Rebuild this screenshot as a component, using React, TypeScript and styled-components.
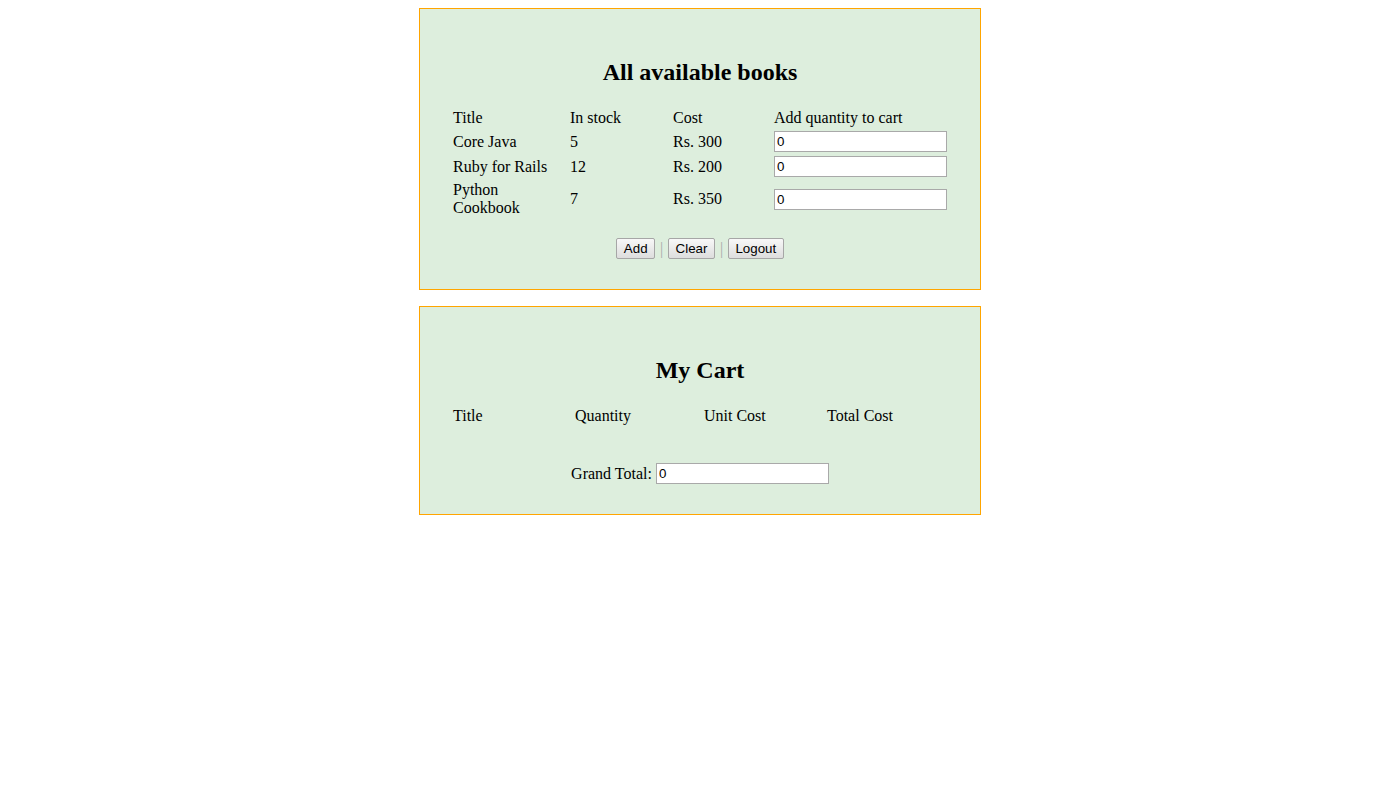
import React from "react";
import styled, { createGlobalStyle } from "styled-components";

const GlobalStyle = createGlobalStyle`
  body {
    margin: 8px;
    background: #ffffff;
    font-family: "Liberation Serif", "Times New Roman", serif;
    font-size: 16px;
    color: #000000;
  }
`;

const Page = styled.div`
  display: flex;
  flex-direction: column;
  align-items: center;
  gap: 16px;
`;

const Panel = styled.section`
  width: 560px;
  border: 1px solid #ffa500;
  background: #ddeedd;
  padding: 49px 0 30px;
  display: flex;
  flex-direction: column;
  align-items: center;
`;

const Heading = styled.h2`
  margin: 0;
  font-family: "Liberation Serif", "Times New Roman", serif;
  font-size: 24px;
  font-weight: bold;
  line-height: 28px;
  text-align: center;
`;

const Grid = styled.div<{ $cols: string }>`
  margin-top: 20px;
  width: 500px;
  box-sizing: border-box;
  padding: 2px;
  display: grid;
  grid-template-columns: ${(p) => p.$cols};
  column-gap: 2px;
  row-gap: 2px;
  align-items: center;
`;

const Cell = styled.div`
  padding: 1px;
  line-height: 18px;
  text-align: left;
`;

const QtyInput = styled.input`
  display: block;
  width: 173px;
  height: 21px;
  box-sizing: border-box;
  border: 1px solid #a9a9a9;
  padding: 1px 2px;
  margin: 0;
  background: #ffffff;
  font-family: "Liberation Sans", Arial, sans-serif;
  font-size: 13.33px;
  color: #000000;
  outline: none;
`;

const Actions = styled.div`
  margin-top: 18px;
  display: flex;
  align-items: center;
  gap: 5px;
`;

const Button = styled.button`
  height: 21px;
  box-sizing: border-box;
  padding: 0 6.5px;
  margin: 0;
  border: 1px solid #a6a6a6;
  border-radius: 2px;
  background: linear-gradient(#f8f8f8, #dddddd);
  font-family: "Liberation Sans", Arial, sans-serif;
  font-size: 13.33px;
  color: #000000;
  line-height: 19px;
`;

const Sep = styled.span`
  color: #aaaaaa;
  font-size: 16px;
  line-height: 18px;
  width: 3px;
  text-align: center;
`;

const TotalRow = styled.div`
  margin-top: 35px;
  display: flex;
  align-items: center;
  gap: 4px;
  line-height: 18px;
`;

const books = [
  { title: "Core Java", stock: 5, cost: "Rs. 300" },
  { title: "Ruby for Rails", stock: 12, cost: "Rs. 200" },
  { title: "Python Cookbook", stock: 7, cost: "Rs. 350" },
];

export default function App() {
  return (
    <>
      <GlobalStyle />
      <Page>
        <Panel>
          <Heading>All available books</Heading>
          <Grid $cols="115px 101px 99px 175px">
            <Cell>Title</Cell>
            <Cell>In stock</Cell>
            <Cell>Cost</Cell>
            <Cell>Add quantity to cart</Cell>
            {books.map((b) => (
              <React.Fragment key={b.title}>
                <Cell>{b.title}</Cell>
                <Cell>{b.stock}</Cell>
                <Cell>{b.cost}</Cell>
                <Cell>
                  <QtyInput type="text" defaultValue="0" />
                </Cell>
              </React.Fragment>
            ))}
          </Grid>
          <Actions>
            <Button>Add</Button>
            <Sep>|</Sep>
            <Button>Clear</Button>
            <Sep>|</Sep>
            <Button>Logout</Button>
          </Actions>
        </Panel>
        <Panel>
          <Heading>My Cart</Heading>
          <Grid $cols="120px 127px 121px 122px">
            <Cell>Title</Cell>
            <Cell>Quantity</Cell>
            <Cell>Unit Cost</Cell>
            <Cell>Total Cost</Cell>
          </Grid>
          <TotalRow>
            <span>Grand Total:</span>
            <QtyInput type="text" defaultValue="0" />
          </TotalRow>
        </Panel>
      </Page>
    </>
  );
}
